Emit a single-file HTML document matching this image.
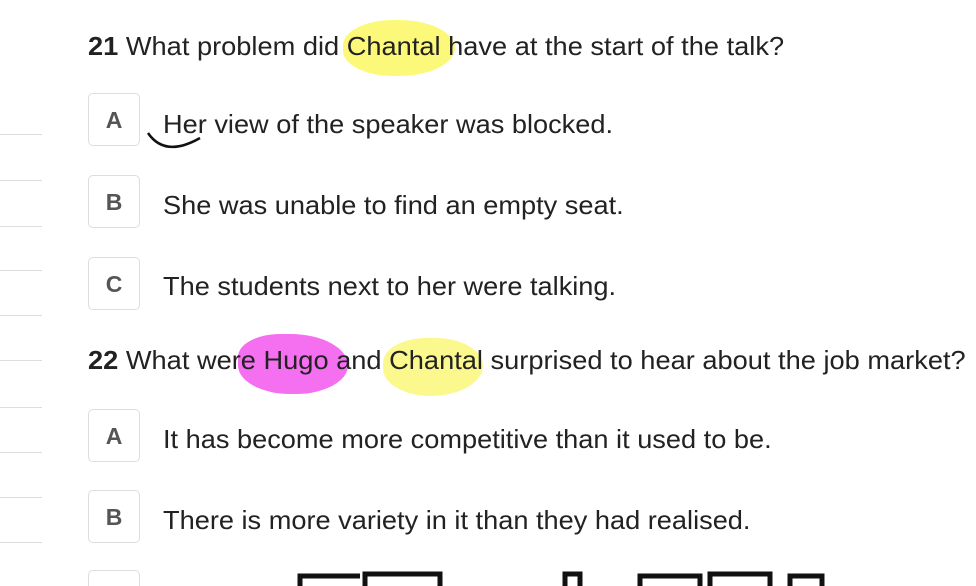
<!DOCTYPE html>
<html><head><style>
html,body{margin:0;width:976px;height:586px;overflow:hidden}
body{background:#fff;position:relative;font-family:"Liberation Sans",sans-serif;color:#222}
.l{position:absolute;left:0;width:42px;height:1px;background:#ddd}
.b{position:absolute;left:88px;width:52px;height:53px;border:1px solid #ddd;border-radius:5px;box-sizing:border-box;font-weight:bold;font-size:23px;color:#555;text-align:center;line-height:52px}
.t{position:absolute;left:163px;font-size:26px;line-height:1;white-space:nowrap;transform:scaleX(1.045);transform-origin:0 0}
.q{position:absolute;left:88px;font-size:26px;line-height:1;white-space:nowrap;transform:scaleX(1.047);transform-origin:0 0}
.h{position:absolute;border-radius:50%}
</style></head><body>
<div class="h" style="left:343px;top:20px;width:112px;height:56px;background:#fcf97a;border-radius:45% 50% 50% 45%"></div>
<div class="h" style="left:238px;top:334px;width:110px;height:60px;background:#f570f0;border-radius:40% 55% 50% 50%"></div>
<div class="h" style="left:383px;top:338px;width:100px;height:58px;background:#fbf98e;border-radius:45% 50% 55% 50%"></div>
<div class="q" style="top:33px"><b>21</b> What problem did Chantal have at the start of the talk?</div>
<div class="q" style="top:347px"><b>22</b> What were Hugo and Chantal surprised to hear about the job market?</div>
<div class="l" style="top:134px"></div><div class="l" style="top:180px"></div><div class="l" style="top:226px"></div><div class="l" style="top:270px"></div><div class="l" style="top:315px"></div><div class="l" style="top:360px"></div><div class="l" style="top:407px"></div><div class="l" style="top:452px"></div><div class="l" style="top:497px"></div><div class="l" style="top:542px"></div>
<div class="b" style="top:93px">A</div><div class="t" style="top:111px">Her view of the speaker was blocked.</div>
<div class="b" style="top:175px">B</div><div class="t" style="top:192px">She was unable to find an empty seat.</div>
<div class="b" style="top:257px">C</div><div class="t" style="top:273px">The students next to her were talking.</div>
<div class="b" style="top:409px">A</div><div class="t" style="top:426px">It has become more competitive than it used to be.</div>
<div class="b" style="top:490px">B</div><div class="t" style="top:507px">There is more variety in it than they had realised.</div>
<div class="b" style="top:570px;height:16px;border-bottom:none;border-radius:5px 5px 0 0"></div>
<svg style="position:absolute;left:0;top:0" width="976" height="586"><path d="M148 133 Q165 158 200 138" stroke="#111" stroke-width="2.5" fill="none"/>
<path d="M300 586 V576 H360 M365 586 V574 H440 V586 M565 586 V574 H580 V586 M640 586 V576 H700 V586 M710 586 V574 H770 V586 M790 586 V576 H822 V586" stroke="#111" stroke-width="5" fill="none"/></svg>
</body></html>
